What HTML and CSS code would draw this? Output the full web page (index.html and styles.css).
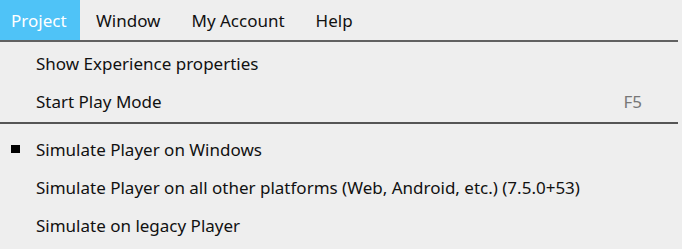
FILE: index.html
```html
<!DOCTYPE html>
<html>
<head>
<meta charset="utf-8">
<link rel="stylesheet" href="styles.css">
</head>
<body>
<div class="menubar">
  <div class="top active">Project</div>
  <div class="top">Window</div>
  <div class="top">My Account</div>
  <div class="top">Help</div>
</div>
<div class="menu">
  <div class="item"><span class="mark"></span><span class="label">Show Experience properties</span></div>
  <div class="item"><span class="mark"></span><span class="label">Start Play Mode</span><span class="key">F5</span></div>
  <div class="sep"></div>
  <div class="item"><span class="mark"><span class="bullet"></span></span><span class="label">Simulate Player on Windows</span></div>
  <div class="item"><span class="mark"></span><span class="label">Simulate Player on all other platforms (Web, Android, etc.) (7.5.0+53)</span></div>
  <div class="item"><span class="mark"></span><span class="label">Simulate on legacy Player</span></div>
</div>
</body>
</html>
```
FILE: styles.css
```css
html, body {
  margin: 0;
  padding: 0;
  background: #eeeeee;
}
body {
  width: 682px;
  height: 249px;
  overflow: hidden;
  font-family: "Noto Sans", "Open Sans", sans-serif;
  font-size: 17px;
  color: #111111;
}
.menubar {
  display: flex;
  height: 40px;
  width: 678px;
  border-bottom: 2px solid #616161;
}
.top {
  display: flex;
  align-items: center;
  padding: 0 15px 0 16px;
}
.top.active {
  background: #4fc3f7;
  color: #ffffff;
  width: 80px;
  box-sizing: border-box;
  padding: 0 0 0 11px;
}
.menu {
  width: 678px;
  padding-top: 2px;
}
.item {
  display: flex;
  align-items: center;
  height: 38px;
}
.mark {
  width: 36px;
  display: flex;
  justify-content: flex-start;
  padding-left: 11px;
  box-sizing: border-box;
}
.bullet {
  width: 9px;
  height: 8px;
  background: #000000;
}
.label {
  flex: 1;
}
.key {
  color: #777777;
  margin-right: 36px;
}
.sep {
  height: 2px;
  background: #555555;
  margin: 2px 0 6px 0;
}
```
